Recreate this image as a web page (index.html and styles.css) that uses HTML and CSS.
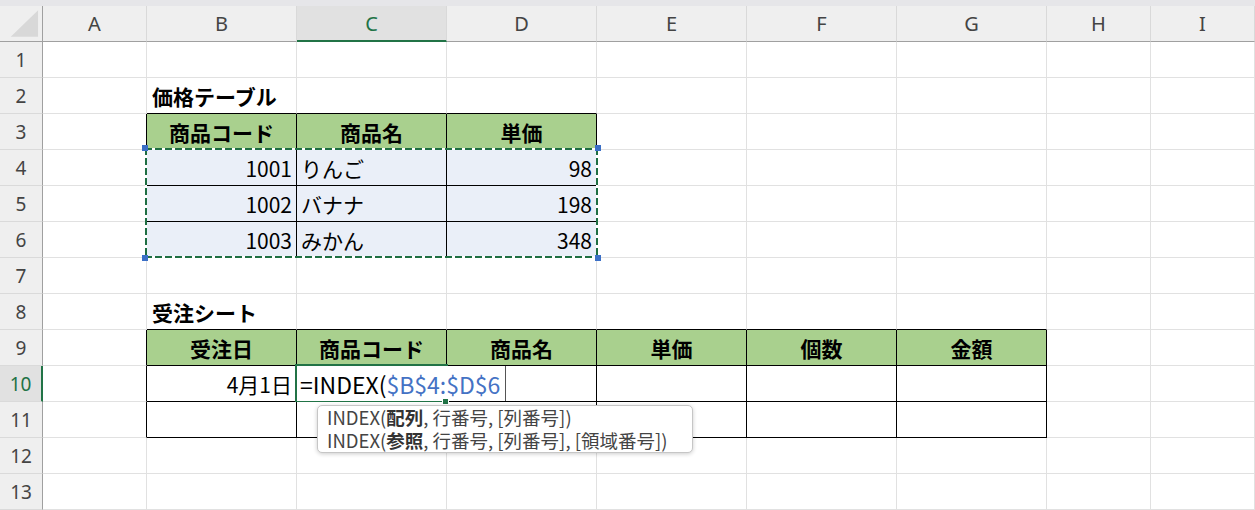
FILE: index.html
```html
<!DOCTYPE html>
<html lang="ja">
<head>
  <meta charset="UTF-8" />
  <title>INDEX関数 - Excel</title>
  <link rel="stylesheet" href="styles.css">
</head>
<body>
  <div class="topbar"></div>

  <div class="sheet">
    <div class="row colhead">
      <div class="corner">
        <svg width="43" height="35" viewBox="0 0 43 35"><polygon points="11,31 39,4 39,31" fill="#d8d8d8" /></svg>
      </div>
      <div class="ch">A</div>
      <div class="ch">B</div>
      <div class="ch sel">C</div>
      <div class="ch">D</div>
      <div class="ch">E</div>
      <div class="ch">F</div>
      <div class="ch">G</div>
      <div class="ch">H</div>
      <div class="ch">I</div>
    </div>

    <div class="row">
      <div class="rh">1</div>
      <div class="c"></div><div class="c"></div><div class="c"></div><div class="c"></div><div class="c"></div><div class="c"></div><div class="c"></div><div class="c"></div><div class="c"></div>
    </div>

    <div class="row">
      <div class="rh">2</div>
      <div class="c"></div>
      <div class="c tt title">価格テーブル</div>
      <div class="c tt"></div>
      <div class="c tt"></div>
      <div class="c"></div><div class="c"></div><div class="c"></div><div class="c"></div><div class="c"></div>
    </div>

    <div class="row">
      <div class="rh">3</div>
      <div class="c tl"></div>
      <div class="c t head">商品コード</div>
      <div class="c t head">商品名</div>
      <div class="c t head">単価</div>
      <div class="c"></div><div class="c"></div><div class="c"></div><div class="c"></div><div class="c"></div>
    </div>

    <div class="row">
      <div class="rh">4</div>
      <div class="c tl"></div>
      <div class="c t hl num anchor">1001
        <div class="range">
          <span class="knob k-tl"></span>
          <span class="knob k-tr"></span>
          <span class="knob k-bl"></span>
          <span class="knob k-br"></span>
        </div>
      </div>
      <div class="c t hl">りんご</div>
      <div class="c t hl num">98</div>
      <div class="c"></div><div class="c"></div><div class="c"></div><div class="c"></div><div class="c"></div>
    </div>

    <div class="row">
      <div class="rh">5</div>
      <div class="c tl"></div>
      <div class="c t hl num">1002</div>
      <div class="c t hl">バナナ</div>
      <div class="c t hl num">198</div>
      <div class="c"></div><div class="c"></div><div class="c"></div><div class="c"></div><div class="c"></div>
    </div>

    <div class="row">
      <div class="rh">6</div>
      <div class="c tl"></div>
      <div class="c t hl num">1003</div>
      <div class="c t hl">みかん</div>
      <div class="c t hl num">348</div>
      <div class="c"></div><div class="c"></div><div class="c"></div><div class="c"></div><div class="c"></div>
    </div>

    <div class="row">
      <div class="rh">7</div>
      <div class="c"></div><div class="c"></div><div class="c"></div><div class="c"></div><div class="c"></div><div class="c"></div><div class="c"></div><div class="c"></div><div class="c"></div>
    </div>

    <div class="row">
      <div class="rh">8</div>
      <div class="c"></div>
      <div class="c tt title">受注シート</div>
      <div class="c tt"></div>
      <div class="c tt"></div>
      <div class="c tt"></div>
      <div class="c tt"></div>
      <div class="c tt"></div>
      <div class="c"></div><div class="c"></div>
    </div>

    <div class="row">
      <div class="rh">9</div>
      <div class="c tl"></div>
      <div class="c t head">受注日</div>
      <div class="c t head">商品コード</div>
      <div class="c t head">商品名</div>
      <div class="c t head">単価</div>
      <div class="c t head">個数</div>
      <div class="c t head">金額</div>
      <div class="c"></div><div class="c"></div>
    </div>

    <div class="row">
      <div class="rh sel">10</div>
      <div class="c tl"></div>
      <div class="c t num">4月1日</div>
      <div class="c t anchor">
        <div class="active"></div>
        <div class="editor">=INDEX(<span class="ref">$B$4:$D$6</span></div>
        <div class="handle"></div>
        <div class="tip">
          <div class="tip-line">INDEX(<b>配列</b>, 行番号, [列番号])</div>
          <div class="tip-line">INDEX(<b>参照</b>, 行番号, [列番号], [領域番号])</div>
        </div>
      </div>
      <div class="c t"></div>
      <div class="c t"></div>
      <div class="c t"></div>
      <div class="c t"></div>
      <div class="c"></div><div class="c"></div>
    </div>

    <div class="row">
      <div class="rh">11</div>
      <div class="c tl"></div>
      <div class="c t"></div>
      <div class="c t"></div>
      <div class="c t"></div>
      <div class="c t"></div>
      <div class="c t"></div>
      <div class="c t"></div>
      <div class="c"></div><div class="c"></div>
    </div>

    <div class="row">
      <div class="rh">12</div>
      <div class="c"></div><div class="c"></div><div class="c"></div><div class="c"></div><div class="c"></div><div class="c"></div><div class="c"></div><div class="c"></div><div class="c"></div>
    </div>

    <div class="row">
      <div class="rh">13</div>
      <div class="c"></div><div class="c"></div><div class="c"></div><div class="c"></div><div class="c"></div><div class="c"></div><div class="c"></div><div class="c"></div><div class="c"></div>
    </div>
  </div>
</body>
</html>
```

FILE: styles.css
```css
body {
  margin: 0;
  padding: 0;
  background-color: #ffffff;
  font-family: 'Noto Sans CJK JP', sans-serif;
  color: #000;
  overflow: hidden;
}
.topbar {
  height: 6px;
  background-color: #e6e6e9;
}
.row {
  display: grid;
  grid-template-columns: 43px 104px repeat(6, 150px) 104px 104px;
  height: 36px;
}
.row > div {
  box-sizing: border-box;
  display: flex;
  align-items: center;
  white-space: nowrap;
}

/* headers */
.corner {
  background-color: #efefef;
  border-right: 1px solid #a0a0a0;
  border-bottom: 1px solid #a0a0a0;
}
.corner svg {
  display: block;
}
.ch {
  justify-content: center;
  background-color: #efefef;
  border-right: 1px solid #d9d9d9;
  border-bottom: 1px solid #a0a0a0;
  font-family: 'Noto Sans', sans-serif;
  font-size: 20px;
  color: #444;
}
.ch.sel {
  background-color: #e1e1e1;
  border-bottom: 2px solid #217346;
  color: #217346;
}
.rh {
  justify-content: center;
  background-color: #efefef;
  border-right: 1px solid #a0a0a0;
  border-bottom: 1px solid #dadada;
  font-family: 'Noto Sans', sans-serif;
  font-size: 19px;
  color: #444;
}
.rh.sel {
  background-color: #e1e1e1;
  border-right: 2px solid #217346;
  color: #217346;
}

/* cells */
.c {
  border-right: 1px solid #e1e1e1;
  border-bottom: 1px solid #e1e1e1;
  padding: 0 4px;
  font-size: 21px;
}
.c.t {
  border-right-color: #000;
  border-bottom-color: #000;
}
.c.tl {
  border-right-color: #000;
}
.c.tt {
  border-bottom-color: #000;
}
.c.title {
  font-weight: bold;
  padding-left: 5px;
}
.c.head {
  justify-content: center;
  font-weight: bold;
  background-color: #a9d08e;
}
.c.hl {
  background-color: #eaeff8;
}
.c.num {
  justify-content: flex-end;
}
.anchor {
  position: relative;
}

/* copied range */
.range {
  position: absolute;
  left: -2px;
  top: -2px;
  width: 453px;
  height: 110px;
  box-sizing: border-box;
  border: 2px solid #fff;
}
.range::before {
  content: "";
  position: absolute;
  top: -2px;
  left: -2px;
  right: -2px;
  bottom: -2px;
  background:
    repeating-linear-gradient(90deg, #1e6e42 0 7px, transparent 7px 10px) top left / 100% 2px no-repeat,
    repeating-linear-gradient(90deg, #1e6e42 0 7px, transparent 7px 10px) bottom left / 100% 2px no-repeat,
    repeating-linear-gradient(180deg, #1e6e42 0 7px, transparent 7px 10px) top left / 2px 100% no-repeat,
    repeating-linear-gradient(180deg, #1e6e42 0 7px, transparent 7px 10px) top right / 2px 100% no-repeat;
}
.knob {
  position: absolute;
  width: 6px;
  height: 6px;
  background-color: #3b6fc6;
}
.k-tl { left: -5px; top: -5px; }
.k-tr { right: -5px; top: -5px; }
.k-bl { left: -5px; bottom: -5px; }
.k-br { right: -5px; bottom: -5px; }

/* active cell */
.active {
  position: absolute;
  left: -2px;
  top: -2px;
  width: 153px;
  height: 38px;
  box-sizing: border-box;
  border: 2px solid #217346;
}
.editor {
  position: absolute;
  left: 0;
  top: 0;
  width: 209px;
  height: 35px;
  box-sizing: border-box;
  padding-left: 3px;
  display: flex;
  align-items: center;
  background-color: #fff;
  border-right: 1px solid #555;
  font-size: 23px;
}
.editor .ref {
  color: #4472c4;
}
.handle {
  position: absolute;
  left: 145px;
  top: 32px;
  width: 5px;
  height: 5px;
  background-color: #217346;
  border: 1px solid #fff;
}
.tip {
  position: absolute;
  left: 20px;
  top: 39px;
  width: 376px;
  height: 48px;
  box-sizing: border-box;
  padding: 0 9px;
  background-color: #fff;
  border: 1px solid #c6c6c6;
  border-radius: 5px;
  box-shadow: 0 1px 4px rgba(0, 0, 0, 0.2);
  font-size: 18.5px;
  color: #444;
  z-index: 3;
}
.tip-line {
  height: 23px;
  line-height: 23px;
}
.tip b {
  color: #333;
}
```
